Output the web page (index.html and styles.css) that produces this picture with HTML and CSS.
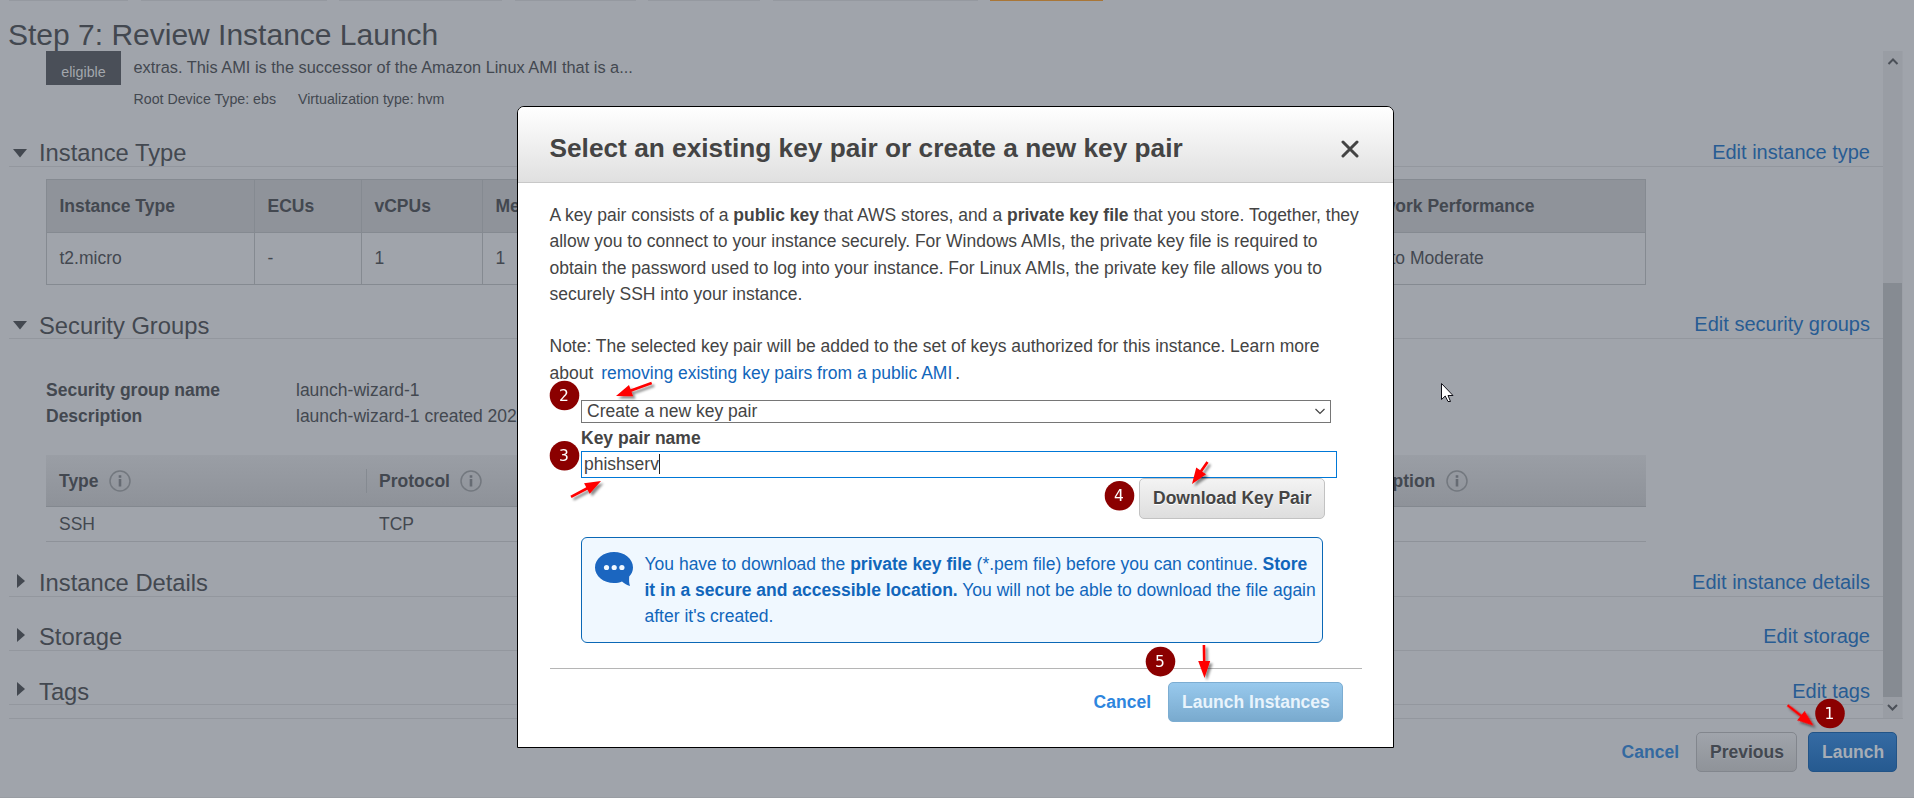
FILE: index.html
```html
<!DOCTYPE html>
<html lang="en">
<head>
<meta charset="utf-8">
<title>Step 7: Review Instance Launch</title>
<link rel="stylesheet" href="styles.css">
</head>
<body>
<div class="page">
  <div class="tabs"><i></i><i></i><i></i><i></i><i></i><i></i><i class="current"></i></div>
  <h1 class="page-title">Step 7: Review Instance Launch</h1>
  <div class="viewport">
    <main class="content">
      <div class="ami">
        <div class="ami-badge">eligible</div>
        <div class="ami-text">
          <p class="ami-desc">extras. This AMI is the successor of the Amazon Linux AMI that is a...</p>
          <p class="ami-meta"><span>Root Device Type: ebs</span><span>Virtualization type: hvm</span></p>
        </div>
      </div>

      <div class="section"><svg class="tri" width="14" height="9"><path d="M0 0H14L7 8.5Z"/></svg><h2>Instance Type</h2><a>Edit instance type</a></div>
      <div class="type-table">
        <div class="row head"><span>Instance Type</span><span>ECUs</span><span>vCPUs</span><span>Me</span><span>Network Performance</span></div>
        <div class="row"><span>t2.micro</span><span>-</span><span>1</span><span>1</span><span>Low to Moderate</span></div>
      </div>

      <div class="section groups"><svg class="tri" width="14" height="9"><path d="M0 0H14L7 8.5Z"/></svg><h2>Security Groups</h2><a>Edit security groups</a></div>
      <dl class="group-info">
        <dt>Security group name</dt><dd>launch-wizard-1</dd>
        <dt>Description</dt><dd>launch-wizard-1 created 202</dd>
      </dl>
      <div class="rules">
        <div class="rule head">
          <span>Type <svg class="info" width="22" height="22"><circle cx="11" cy="11" r="10"/><path d="M9.700 5.200H12.300V7.700H9.700ZM9.700 9H12.300V16.500H9.700Z"/></svg></span>
          <span class="sep">Protocol <svg class="info" width="22" height="22"><circle cx="11" cy="11" r="10"/><path d="M9.700 5.200H12.300V7.700H9.700ZM9.700 9H12.300V16.500H9.700Z"/></svg></span>
          <span>Description <svg class="info" width="22" height="22"><circle cx="11" cy="11" r="10"/><path d="M9.700 5.200H12.300V7.700H9.700ZM9.700 9H12.300V16.500H9.700Z"/></svg></span>
        </div>
        <div class="rule"><span>SSH</span><span>TCP</span><span></span></div>
      </div>

      <div class="section details"><svg class="tri closed" width="8" height="14"><path d="M0 0L8 7L0 14Z"/></svg><h2>Instance Details</h2><a>Edit instance details</a></div>
      <div class="section closed-section"><svg class="tri closed" width="8" height="14"><path d="M0 0L8 7L0 14Z"/></svg><h2>Storage</h2><a>Edit storage</a></div>
      <div class="section closed-section tags"><svg class="tri closed" width="8" height="14"><path d="M0 0L8 7L0 14Z"/></svg><h2>Tags</h2><a>Edit tags</a></div>
    </main>
    <div class="scrollbar">
      <svg width="19" height="22"><path d="M5.5 13L10 8.5L14.5 13"/></svg>
      <div class="thumb"></div>
      <svg width="19" height="21"><path d="M5 8L9.5 12.5L14 8"/></svg>
    </div>
  </div>
  <footer class="footer">
    <a class="cancel">Cancel</a>
    <button class="btn dim">Previous</button>
    <button class="btn dim-primary">Launch</button>
  </footer>
</div>

<div class="modal">
  <header class="modal-head">
    <h3>Select an existing key pair or create a new key pair</h3>
    <svg width="18" height="18"><path d="M2 2L16 16M16 2L2 16"/></svg>
  </header>
  <div class="modal-body">
    <p>A key pair consists of a <b>public key</b> that AWS stores, and a <b>private key file</b> that you store. Together, they<br>allow you to connect to your instance securely. For Windows AMIs, the private key file is required to<br>obtain the password used to log into your instance. For Linux AMIs, the private key file allows you to<br>securely SSH into your instance.</p>
    <p class="note">Note: The selected key pair will be added to the set of keys authorized for this instance. Learn more<br>about <a>removing existing key pairs from a public AMI</a>.</p>
    <div class="form">
      <div class="select"><span>Create a new key pair</span><svg width="10" height="7"><path d="M.5 1L5 5.5L9.5 1"/></svg></div>
      <label>Key pair name</label>
      <div class="input">phishserv<i class="caret"></i></div>
      <button class="btn download">Download Key Pair</button>
      <div class="notice">
        <svg width="38" height="35" viewBox="0 0 38 35"><path d="M19 0C8.500 0 0 6.800 0 15.500S8.500 31 19 31C22 31 24.500 30.500 27 29.500C29.500 31.500 32 33 35 34C34 31 34 28.500 34.200 24.500C36.600 22 38 19 38 15.500C38 6.800 29.500 0 19 0Z"/><g><circle cx="11.500" cy="15.500" r="2.600"/><circle cx="19.200" cy="15.500" r="2.600"/><circle cx="26.900" cy="15.500" r="2.600"/></g></svg>
        <p>You have to download the <b>private key file</b> (*.pem file) before you can continue. <b>Store<br>it in a secure and accessible location.</b> You will not be able to download the file again<br>after it's created.</p>
      </div>
    </div>
    <div class="actions">
      <a class="modal-cancel">Cancel</a>
      <button class="btn primary">Launch Instances</button>
    </div>
  </div>
</div>

<svg class="marks" width="1914" height="798">
  <defs><filter id="sh" x="-50%" y="-50%" width="200%" height="200%"><feDropShadow dx="2.500" dy="2.500" stdDeviation="1.300" flood-opacity=".45"/></filter></defs>
  <g class="arrows" filter="url(#sh)">
    <g transform="translate(616 396) rotate(-20)"><path d="M0 0L16 -6V-1.300H38V1.300H16V6Z"/></g>
    <g transform="translate(601 481) rotate(152)"><path d="M0 0L16 -6V-1.300H34V1.300H16V6Z"/></g>
    <g transform="translate(1192 484) rotate(-55)"><path d="M0 0L16 -6V-1.300H27V1.300H16V6Z"/></g>
    <g transform="translate(1204.500 678) rotate(-91)"><path d="M0 0L17 -6V-1.300H33V1.300H17V6Z"/></g>
    <g transform="translate(1813.500 725.500) rotate(218)"><path d="M0 0L16 -6V-1.300H33V1.300H16V6Z"/></g>
  </g>
  <g class="dots">
    <circle cx="1830" cy="713.500" r="14.800"/><circle cx="564.500" cy="395.500" r="14.800"/><circle cx="564.500" cy="455.700" r="14.800"/><circle cx="1119.500" cy="495.700" r="14.800"/><circle cx="1160.500" cy="661.600" r="14.800"/>
  </g>
  <g class="nums">
    <text x="1829.500" y="719">1</text><text x="564" y="401">2</text><text x="564" y="461">3</text><text x="1119" y="501">4</text><text x="1160" y="667">5</text>
  </g>
  <path class="cursor" d="M1441.500 383.500V399.500L1445.200 396L1448 401.500H1450.500L1448 395.500H1453Z"/>
</svg>
</body>
</html>
```

FILE: styles.css
```css
* { box-sizing: border-box; }
body { margin: 0; font: 17.5px/26.25px "Liberation Sans", Arial, sans-serif; background: #a0a4ab; overflow: hidden; }
h1, h2, h3, p, dl, dd { margin: 0; font-weight: normal; }

.page { width: 1914px; height: 798px; display: flex; flex-direction: column; color: #434850; border-bottom: 1px solid #999da3; }
.tabs { display: grid; grid-template-columns: 119px 186px 163px 121px 112px 205px 113px; gap: 12.5px; padding-left: 9px; height: 1px; }
.tabs i { height: 1px; background: #9599a0; }
.tabs .current { background: #a97637; }
.page-title { height: 50px; padding: 15px 0 0 8px; font-size: 30px; line-height: 37px; }

.viewport { display: flex; width: 1894px; height: 668px; margin-left: 9px; border-bottom: 1px solid #93979e; }
.content { width: 1874px; }
.ami { display: flex; height: 88px; padding-left: 37px; }
.ami-badge { width: 75px; height: 34px; padding-top: 7px; text-align: center; font-size: 14.3px; background: #4a4f58; color: #a3a7ad; line-height: 28px; }
.ami-text { padding: 3px 0 0 12.5px; }
.ami-desc { font-size: 16.35px; }
.ami-meta { display: flex; gap: 22px; margin-top: 6px; font-size: 14.2px; }

.section { display: flex; align-items: flex-start; height: 28px; border-bottom: 1px solid #93979e; line-height: 27px; }
.section h2 { flex: 1; font-size: 23.75px; }
.section a { padding-right: 13px; font-size: 20px; color: #285c93; }
.tri { width: 14px; margin: 10px 12px 0 4px; fill: #434850; }
.tri.closed { width: 8px; margin: 5px 14px 0 8px; }
.groups { margin-top: 26px; }
.groups h2, .tags h2 { line-height: 29px; }
.tags a { line-height: 28px; }
.details { margin-top: 27px; }
.closed-section { margin-top: 26px; }

.type-table { width: 1600px; margin: 12px 0 0 37px; border: 1px solid #858a91; }
.row { display: grid; grid-template-columns: 207px 107px 121px 858px 1fr; height: 51px; line-height: 51px; }
.row span { padding-left: 12.5px; }
.row span + span { border-left: 1px solid #858a91; }
.row.head { height: 53px; line-height: 53px; background: #8f939a; border-bottom: 1px solid #858a91; font-weight: bold; }

.group-info { display: grid; grid-template-columns: 250px 1fr; margin: 38px 0 0 37px; line-height: 26px; }
.group-info dt { font-weight: bold; }
.rules { width: 1600px; margin: 26px 0 0 37px; }
.rule { display: grid; grid-template-columns: 320px 960px 1fr; align-items: center; height: 35px; padding-left: 13px; border-bottom: 1px solid #8e9299; }
.rule.head { height: 52px; padding-top: 1px; font-weight: bold; background: linear-gradient(#9a9ea5, #8e9299); border-color: #83888f; }
.rule.head span { display: flex; align-items: center; gap: 10.5px; }
.sep { height: 24px; margin-left: -13px; padding-left: 12px; border-left: 1px solid #858a91; }
.sep + span { padding-left: 0; }
.info { fill: none; stroke: #73787f; stroke-width: 1.5; }
.info path { fill: #666b73; stroke: none; }

.scrollbar { width: 20px; background: linear-gradient(90deg, #999da4 19px, #9ca0a7 19px); display: flex; flex-direction: column; justify-content: space-between; }
.scrollbar svg { fill: none; stroke: #4b5058; stroke-width: 2; }
.thumb { width: 19px; height: 414px; margin-top: auto; background: #868b92; }

.footer { display: flex; align-items: center; justify-content: flex-end; padding: 13px 17px 0 0; }
.cancel { margin-right: 17px; color: #3369a0; font-weight: bold; }
.btn { height: 40px; padding: 0 13px; font: bold 17.5px/38px "Liberation Sans", Arial, sans-serif; border: 1px solid; border-radius: 5px; white-space: nowrap; }
.dim { width: 101px; color: #434850; background: linear-gradient(#a0a4ab, #8f9399); border-color: #82868d; margin-right: 11px; text-shadow: 0 1px #a0a4ab; }
.dim-primary { width: 89px; color: #a6adb6; background: linear-gradient(#356ba3, #265a90); border-color: #225487; }

.modal { position: absolute; left: 517px; top: 106px; width: 877px; height: 642px; background: #fff; border: 1px solid #000; border-radius: 7px 7px 0 0; color: #444; overflow: hidden; }
.modal-head { display: flex; justify-content: space-between; align-items: center; height: 76px; padding: 7px 34px 0 31.5px; background: linear-gradient(#fff, #e0e0e0); border-bottom: 1px solid #c8c8c8; }
.modal-head h3 { font-size: 26.25px; font-weight: bold; white-space: nowrap; }
.modal-head svg { margin-top: 1px; stroke: #444; stroke-width: 3; stroke-linecap: round; }
.modal-body { padding: 19px 32px 0 31.5px; white-space: nowrap; }
.modal a { color: #1166bb; }
.note { margin-top: 26.25px; }
.note a { margin: 0 3px; }
.form { display: flex; flex-direction: column; padding: 14px 25px 0 31.5px; }
.select { display: flex; align-items: center; justify-content: space-between; width: 750px; height: 23px; padding: 0 5px; border: 1px solid #767676; line-height: 20px; }
.select svg { fill: none; stroke: #444; stroke-width: 1.2; }
.form label { height: 28px; padding-top: 2px; font-weight: bold; }
.input { display: flex; align-items: center; width: 756px; height: 27px; padding-left: 2px; border: 1px solid #0078d7; }
.caret { width: 1px; height: 20px; background: #222; }
.download { width: 186px; height: 41px; margin-left: 558px; color: #444; background: linear-gradient(#f3f3f3, #dedede); border-color: #c2c2c2; text-shadow: 0 1px #fff; }
.notice { display: flex; width: 742px; height: 106px; margin-top: 18px; padding: 13px 0 0 13px; background: #f0f8ff; border: 1px solid #0b68b6; border-radius: 6px; color: #1166bb; }
.notice svg { flex: none; margin: 1px 11.5px 0 0; fill: #1b66c0; }
.notice g { fill: #f0f8ff; }
.actions { display: flex; align-items: center; justify-content: flex-end; margin: 25px -1px 0 0; padding: 13px 19px 0 0; border-top: 1px solid #b5b5b5; }
.modal .modal-cancel { margin-right: 17px; color: #2e86de; font-weight: bold; }
.primary { width: 175px; color: #e9f4fc; background: linear-gradient(#98c9ed, #79aace); border-color: #7cadd2; }

.marks { position: absolute; left: 0; top: 0; }
.arrows { fill: #f00; }
.dots { fill: #8b0000; }
.nums { fill: #fff; font: 15.5px "DejaVu Sans", sans-serif; text-anchor: middle; }
.cursor { fill: #fff; stroke: #101018; stroke-width: 1; }
```
